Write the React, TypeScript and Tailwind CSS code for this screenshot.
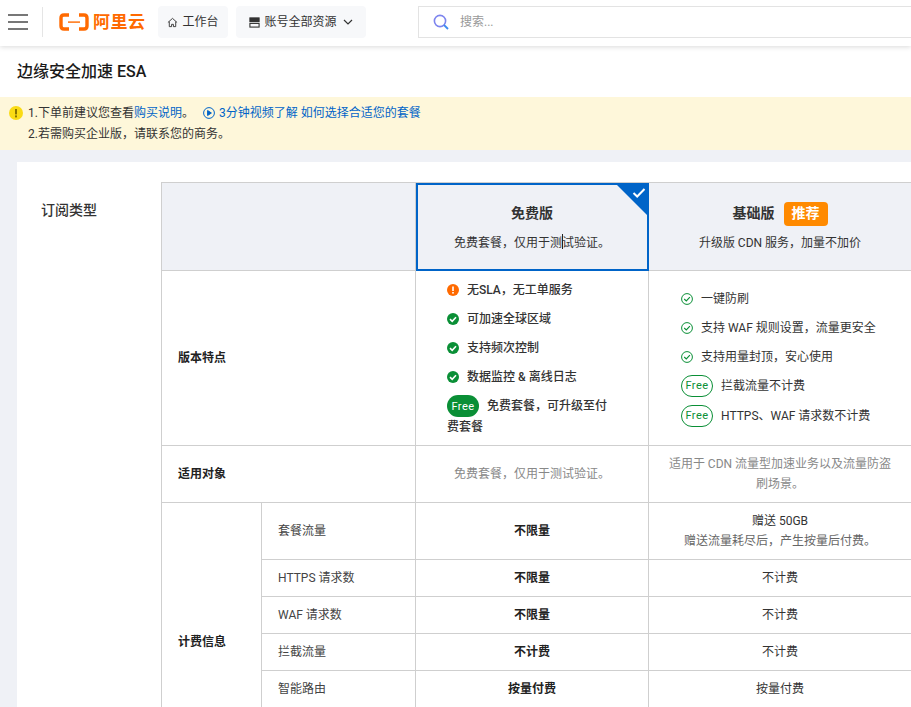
import React from "react";

const font = "font-['Roboto','Noto_Sans_CJK_SC',sans-serif]";

const CheckSolid = () => (
  <svg width="12" height="12" viewBox="0 0 12 12" className="shrink-0">
    <circle cx="6" cy="6" r="6" fill="#0a8f36" />
    <path d="M3 6.2 5.2 8.3 9 4.2" fill="none" stroke="#fff" strokeWidth="1.6" />
  </svg>
);

const CheckLine = () => (
  <svg width="12" height="12" viewBox="0 0 12 12" className="shrink-0">
    <circle cx="6" cy="6" r="5.4" fill="none" stroke="#0a8f36" strokeWidth="1" />
    <path d="M3.2 6 5.3 8 8.9 4.2" fill="none" stroke="#0a8f36" strokeWidth="1.1" />
  </svg>
);

const Warn = () => (
  <svg width="12" height="12" viewBox="0 0 12 12" className="shrink-0">
    <circle cx="6" cy="6" r="6" fill="#ff6a00" />
    <rect x="5.2" y="2.5" width="1.6" height="4.5" fill="#fff" />
    <rect x="5.2" y="8" width="1.6" height="1.6" fill="#fff" />
  </svg>
);

const FreeTag = () => (
  <span className="w-[32px] h-[22px] shrink-0 flex items-center justify-center rounded-full border border-[#0a8f36] text-[#0a8f36] text-[11px] tracking-[0.5px]">
    Free
  </span>
);

const rowLine = "border-b border-r border-[#cfcfcf]";

const PriceRow = ({ name, free, basic }: { name: string; free: string; basic: string }) => (
  <tr className="h-[37px]">
    <td className={`${rowLine} px-4 text-[#444]`}>{name}</td>
    <td className={`${rowLine} text-center font-bold text-[#222]`}>{free}</td>
    <td className={`${rowLine} text-center text-[#333]`}>{basic}</td>
  </tr>
);

export default function App() {
  return (
    <div className={`${font} w-[911px] h-[707px] overflow-hidden bg-white text-[12px] text-[#333]`}>
      <header className="relative z-10 h-[46px] pb-[2px] flex items-center bg-white shadow-[0_1px_5px_rgba(0,0,0,0.15)]">
        <div className="w-[43px] h-[30px] shrink-0 flex flex-col justify-center gap-[5px] pl-2 border-r border-[#e5e5e5]">
          <span className="w-5 h-[2px] bg-[#777]" />
          <span className="w-5 h-[2px] bg-[#777]" />
          <span className="w-5 h-[2px] bg-[#777]" />
        </div>
        <svg width="30" height="18" viewBox="0 0 30 18" className="ml-[16px] shrink-0">
          <path d="M10 2H5Q2 2 2 5V13Q2 16 5 16H10M20 2H25Q28 2 28 5V13Q28 16 25 16H20" fill="none" stroke="#ff6a00" strokeWidth="3.4" />
          <rect x="9" y="8.4" width="12" height="1.4" fill="#ff6a00" />
        </svg>
        <span className="ml-[4px] w-[54px] shrink-0 text-[17px] leading-none font-bold text-[#ff6a00] tracking-[0.5px] whitespace-nowrap">阿里云</span>
        <div className="ml-[11px] w-[70px] h-[32px] shrink-0 flex items-center justify-center gap-[4px] rounded-sm bg-[#f7f8fa] text-[#333]">
          <svg width="11" height="11" viewBox="0 0 12 12" fill="none" stroke="#333" strokeWidth="1">
            <path d="M1 6 6 1.5 11 6M2.5 5V10.5H5V8H7V10.5H9.5V5" />
          </svg>
          工作台
        </div>
        <div className="ml-[8px] w-[130px] h-[32px] shrink-0 flex items-center justify-center gap-[4px] rounded-sm bg-[#f7f8fa] text-[#333]">
          <svg width="11" height="11" viewBox="0 0 12 12" fill="none" stroke="#333" strokeWidth="1.2">
            <rect x="1" y="1" width="10" height="4" fill="#333" />
            <rect x="1" y="7" width="10" height="4" />
          </svg>
          账号全部资源
          <svg width="10" height="10" viewBox="0 0 10 10" fill="none" stroke="#333" strokeWidth="1.2" className="ml-[2px]">
            <path d="M1 3 5 7 9 3" />
          </svg>
        </div>
        <div className="ml-[52px] w-[520px] h-[32px] shrink-0 flex items-center pl-[14px] border border-[#e3e3e3] bg-white">
          <svg width="16" height="16" viewBox="0 0 16 16" fill="none">
            <circle cx="7" cy="7" r="5.6" stroke="#7d84ee" strokeWidth="1.6" />
            <path d="M11 11 15 15" stroke="#3d8bf0" strokeWidth="1.8" />
          </svg>
          <span className="ml-[11px] text-[#999]">搜索...</span>
        </div>
      </header>

      <div className="h-[51px] flex items-center pl-[17px] text-[16px] font-medium text-[#1a1a1a]">边缘安全加速 ESA</div>

      <div className="h-[53px] flex flex-col justify-center gap-[3px] bg-[#fef7da] text-[#333] leading-[18px]">
        <div className="flex items-center pl-[9px]">
          <svg width="14" height="14" viewBox="0 0 14 14" className="shrink-0">
            <circle cx="7" cy="7" r="7" fill="#fadb14" />
            <rect x="6" y="3" width="2" height="5.4" fill="#8a7500" />
            <rect x="6" y="9.4" width="2" height="2" fill="#8a7500" />
          </svg>
          <span className="ml-[5px]">1.下单前建议您查看<span className="text-[#0064c8]">购买说明</span>。</span>
          <svg width="12" height="12" viewBox="0 0 12 12" className="ml-[9px] shrink-0" fill="none" stroke="#0064c8">
            <circle cx="6" cy="6" r="5.4" />
            <path d="M4.6 3.5 8.4 6 4.6 8.5Z" fill="#0064c8" />
          </svg>
          <span className="ml-[4px] text-[#0064c8]">3分钟视频了解 如何选择合适您的套餐</span>
        </div>
        <div className="pl-[28px]">2.若需购买企业版，请联系您的商务。</div>
      </div>

      <main className="h-[557px] bg-[#eff1f6] pl-[17px] pt-[12px]">
        <div className="h-[545px] w-[894px] pt-[20px] bg-white flex overflow-hidden">
          <div className="w-[144px] shrink-0 pl-[24px] pt-[18px] text-[14px] font-medium text-[#333]">订阅类型</div>
          <table className="w-[750px] shrink-0 table-fixed border-collapse border-t border-l border-[#cfcfcf] self-start">
            <colgroup>
              <col className="w-[100px]" />
              <col className="w-[154px]" />
              <col className="w-[233px]" />
              <col className="w-[263px]" />
            </colgroup>
            <tbody>
              <tr className="h-[88px]">
                <td colSpan={2} className={`${rowLine} bg-[#eff1f6]`} />
                <td className={`${rowLine} relative bg-[#eff1f6] text-center`}>
                  <div className="absolute top-0 left-0 -right-px -bottom-px border-2 border-[#0064c8]" />
                  <div className="absolute top-0 -right-px w-0 h-0 border-t-[34px] border-l-[34px] border-t-[#0064c8] border-l-transparent" />
                  <svg width="14" height="12" viewBox="0 0 14 12" className="absolute top-[4px] right-[2px]" fill="none" stroke="#fff" strokeWidth="2">
                    <path d="M1.5 6 5.2 9.5 12.5 2" />
                  </svg>
                  <div className="text-[14px] font-bold text-[#333] mt-[2px]">免费版</div>
                  <div className="mt-[10px] text-[#333]">免费套餐，仅用于测试验证。</div>
                  <span className="absolute left-[146px] top-[51px] w-px h-[15px] bg-[#222]" />
                </td>
                <td className={`${rowLine} bg-[#eff1f6] text-center`}>
                  <div className="flex items-center justify-center gap-[9px] h-[24px]">
                    <span className="text-[14px] font-bold text-[#333]">基础版</span>
                    <span className="w-[44px] h-[24px] flex items-center justify-center rounded-sm bg-[#ff8a00] text-white text-[14px] font-bold">推荐</span>
                  </div>
                  <div className="mt-[8px] text-[#333]">升级版 CDN 服务，加量不加价</div>
                </td>
              </tr>
              <tr className="h-[175px]">
                <td colSpan={2} className={`${rowLine} px-4 font-bold text-[#222]`}>版本特点</td>
                <td className={`${rowLine} align-top pl-[31px] pr-[32px] font-medium text-[#333]`}>
                  <div className="flex flex-col gap-[11px] pt-[10px]">
                    <div className="flex items-center gap-[8px] h-[18px]"><Warn />无SLA，无工单服务</div>
                    <div className="flex items-center gap-[8px] h-[18px]"><CheckSolid />可加速全球区域</div>
                    <div className="flex items-center gap-[8px] h-[18px]"><CheckSolid />支持频次控制</div>
                    <div className="flex items-center gap-[8px] h-[18px]"><CheckSolid />数据监控 &amp; 离线日志</div>
                    <div className="leading-[21px] -mt-[2px]">
                      <span className="inline-flex items-center justify-center w-[32px] h-[22px] mr-[8px] rounded-full bg-[#0a8f36] text-white text-[11px] font-normal tracking-[0.5px]">Free</span>
                      免费套餐，可升级至付费套餐
                    </div>
                  </div>
                </td>
                <td className={`${rowLine} align-top pl-[32px] text-[#333]`}>
                  <div className="flex flex-col gap-[11px] pt-[19px]">
                    <div className="flex items-center gap-[8px] h-[18px]"><CheckLine />一键防刷</div>
                    <div className="flex items-center gap-[8px] h-[18px]"><CheckLine />支持 WAF 规则设置，流量更安全</div>
                    <div className="flex items-center gap-[8px] h-[18px]"><CheckLine />支持用量封顶，安心使用</div>
                    <div className="flex items-center gap-[8px] h-[18px]"><FreeTag />拦截流量不计费</div>
                    <div className="flex items-center gap-[8px] h-[18px] mt-[1px]"><FreeTag />HTTPS、WAF 请求数不计费</div>
                  </div>
                </td>
              </tr>
              <tr className="h-[57px]">
                <td colSpan={2} className={`${rowLine} px-4 font-bold text-[#222]`}>适用对象</td>
                <td className={`${rowLine} text-center text-[#888]`}>免费套餐，仅用于测试验证。</td>
                <td className={`${rowLine} text-center text-[#888] leading-[20px] px-[16px]`}>适用于 CDN 流量型加速业务以及流量防盗刷场景。</td>
              </tr>
              <tr className="h-[57px]">
                <td rowSpan={7} className={`${rowLine} px-4 font-bold text-[#222]`}>计费信息</td>
                <td className={`${rowLine} px-4 text-[#444]`}>套餐流量</td>
                <td className={`${rowLine} text-center font-bold text-[#222]`}>不限量</td>
                <td className={`${rowLine} text-center leading-[20px]`}>
                  <div className="text-[#333]">赠送 50GB</div>
                  <div className="text-[#666]">赠送流量耗尽后，产生按量后付费。</div>
                </td>
              </tr>
              <PriceRow name="HTTPS 请求数" free="不限量" basic="不计费" />
              <PriceRow name="WAF 请求数" free="不限量" basic="不计费" />
              <PriceRow name="拦截流量" free="不计费" basic="不计费" />
              <PriceRow name="智能路由" free="按量付费" basic="按量付费" />
              <PriceRow name="" free="" basic="" />
              <PriceRow name="" free="" basic="" />
            </tbody>
          </table>
        </div>
      </main>
    </div>
  );
}
